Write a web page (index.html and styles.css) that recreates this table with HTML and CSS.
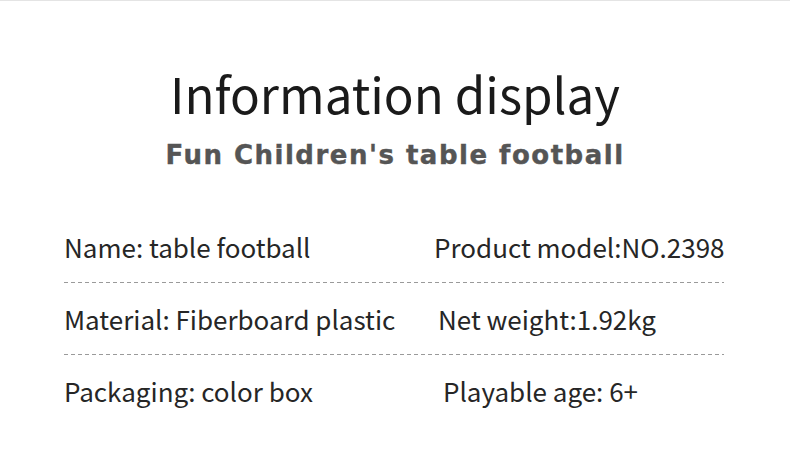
FILE: index.html
```html
<!DOCTYPE html>
<html lang="en">
<head>
<meta charset="utf-8">
<title>Information display</title>
<link rel="stylesheet" href="styles.css">
</head>
<body>
<div class="page">
  <header class="head">
    <h1 class="title">Information display</h1>
    <h2 class="subtitle">Fun Children's table football</h2>
  </header>
  <div class="info">
    <div class="row">
      <span class="cell">Name: table football</span>
      <span class="cell right">Product model:NO.2398</span>
    </div>
    <div class="rule"></div>
    <div class="row">
      <span class="cell">Material: Fiberboard plastic</span>
      <span class="cell right r2">Net weight:1.92kg</span>
    </div>
    <div class="rule"></div>
    <div class="row">
      <span class="cell">Packaging: color box</span>
      <span class="cell right r3">Playable age: 6+</span>
    </div>
  </div>
</div>
</body>
</html>
```
FILE: styles.css
```css
html, body {
  margin: 0;
  padding: 0;
  background: #ffffff;
}
.page {
  width: 790px;
  height: 474px;
  box-sizing: border-box;
  border-top: 1px solid #e4e4e4;
  font-family: "Noto Sans CJK SC", "Noto Sans", sans-serif;
  color: #222222;
  overflow: hidden;
}
.head {
  display: flex;
  flex-direction: column;
  align-items: center;
  padding-top: 60px;
}
.title {
  margin: 0;
  font-size: 49.3px;
  font-weight: 400;
  line-height: 64px;
  color: #1a1a1a;
}
.subtitle {
  margin: 15px 0 0 0;
  font-family: "DejaVu Sans", "Liberation Sans", sans-serif;
  font-size: 26px;
  font-weight: 700;
  line-height: 30px;
  color: #555555;
  letter-spacing: 1.5px;
  -webkit-text-stroke: 0.4px #555555;
}
.info {
  margin: 60px 66px 0 64px;
}
.row {
  display: grid;
  grid-template-columns: 370px 1fr;
  font-size: 26px;
  line-height: 34px;
  height: 34px;
  color: #262626;
  white-space: nowrap;
}
.rule {
  height: 1px;
  margin: 18px 0 19px 0;
  background-image: repeating-linear-gradient(to right, #9a9a9a 0 4px, transparent 4px 7px);
}
.r2 { padding-left: 4px; }
.r3 { padding-left: 9px; }
```
